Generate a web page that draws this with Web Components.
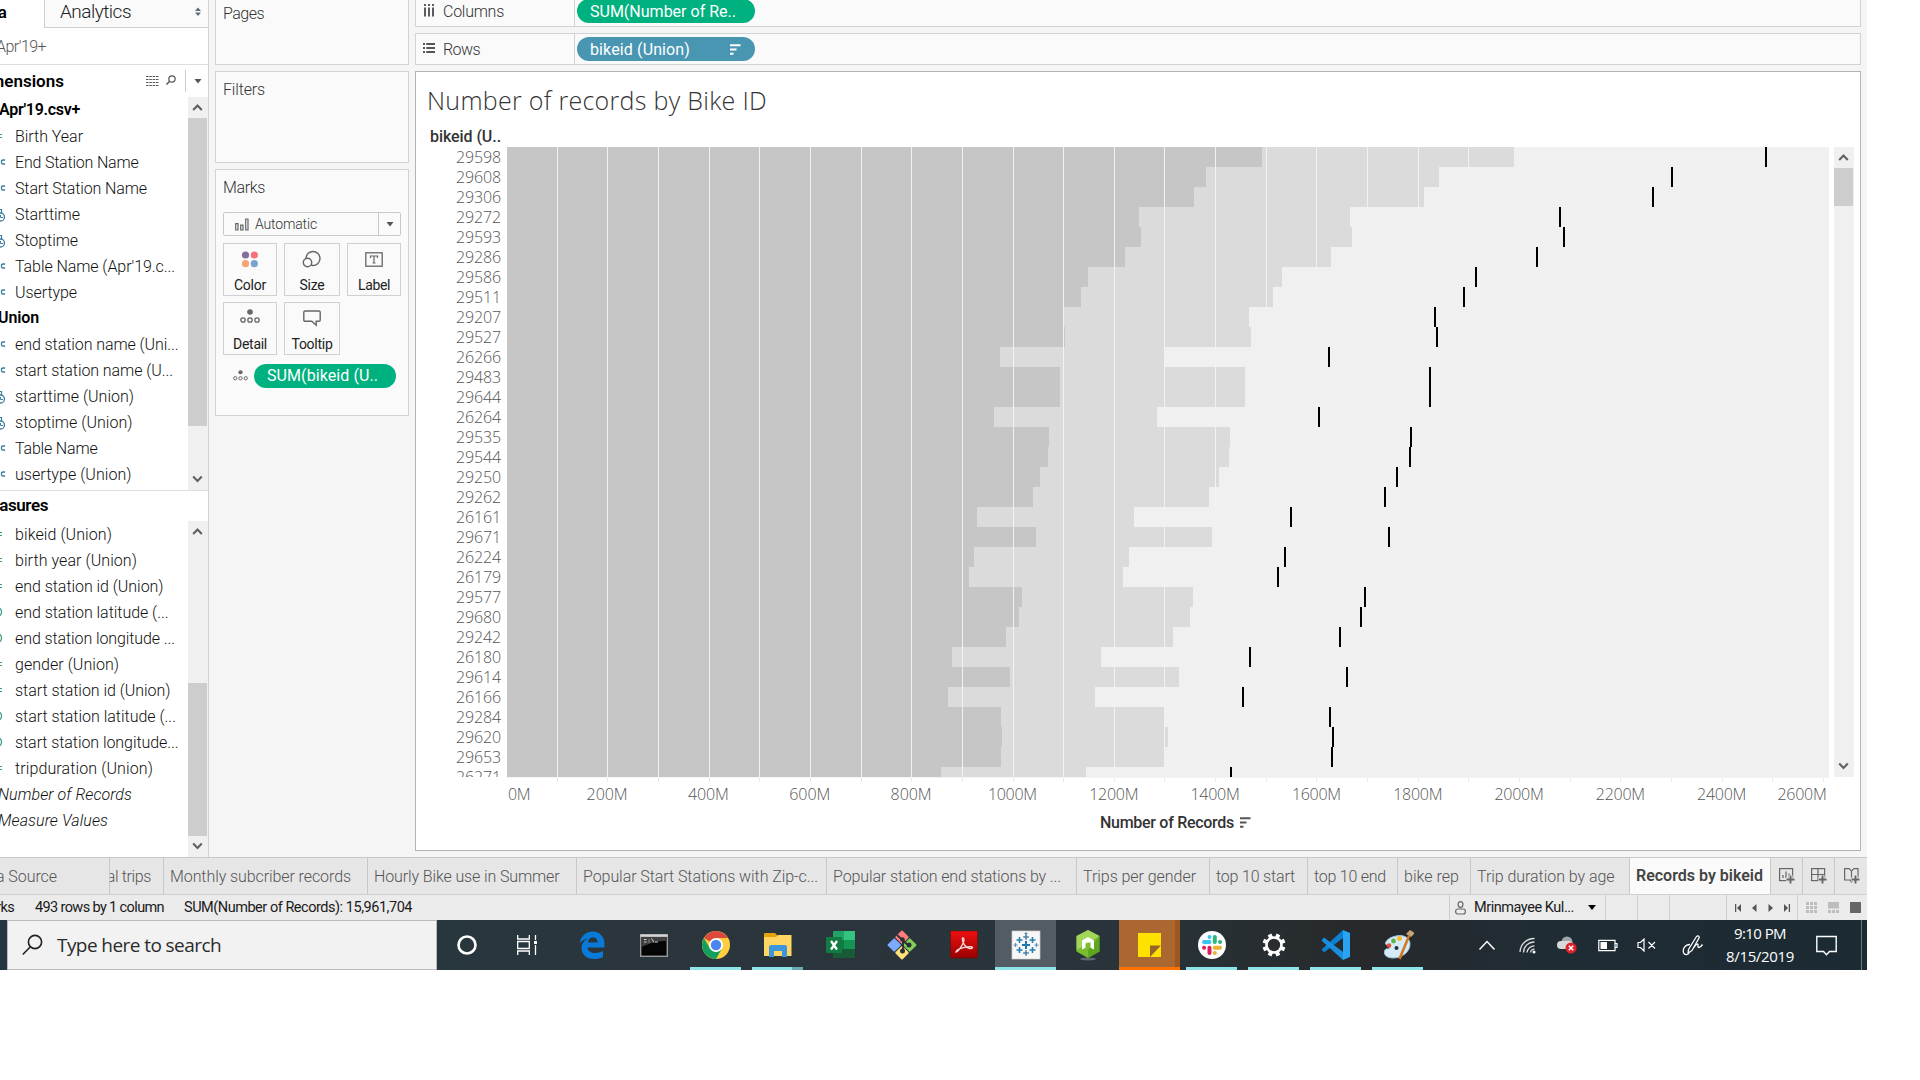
<!DOCTYPE html>
<html lang="en">
<head>
<meta charset="utf-8">
<title>Records by bikeid</title>
<style>
html,body{margin:0;background:#fff;width:1920px;height:1080px;overflow:hidden;font-family:Roboto,"Liberation Sans",sans-serif}
</style>
</head>
<body>
<bike-workbook></bike-workbook>
<script>
const define=(name,render)=>customElements.define(name,class extends HTMLElement{
  connectedCallback(){
    if(this.shadowRoot)return;
    const root=this.attachShadow({mode:'open'});
    root.innerHTML=render(this);
  }
});
const esc=s=>s.replace(/&/g,'&amp;').replace(/</g,'&lt;');

/* One line of text, tracked out or in to the width given by "w". */
customElements.define('fit-text',class extends HTMLElement{
  connectedCallback(){
    if(this.shadowRoot)return;
    const root=this.attachShadow({mode:'open'});
    root.innerHTML='<style>:host{display:block;white-space:pre;flex:none}span{display:inline-block}</style><span><slot></slot></span>';
    const w=+this.getAttribute('w');
    if(w){
      const span=root.querySelector('span'),n=this.textContent.length;
      span.style.letterSpacing=((w-span.getBoundingClientRect().width)/n).toFixed(3)+'px';
    }
  }
});

/* Vertical scrollbar: up/down buttons and a thumb. */
define('scroll-bar',el=>{
  const before=el.getAttribute('before'),size=el.getAttribute('size');
  return `<style>:host{display:flex;flex-direction:column;width:20px;background:#f0f0f0;flex:none}
  svg{display:block;width:19px;height:21px;flex:none}.gap{height:${before}px;flex:none}
  .thumb{height:${size}px;width:19px;background:#cdcdcd;flex:none}.rest{flex:1}</style>
  <svg viewBox="0 0 19 21"><path d="M5.2 13 9.5 8.6 13.8 13" fill="none" stroke="#606060" stroke-width="2.1"/></svg>
  <div class="gap"></div><div class="thumb"></div><div class="rest"></div>
  <svg viewBox="0 0 19 21"><path d="M5.2 7.500 9.5 11.900 13.800 7.500" fill="none" stroke="#606060" stroke-width="2.1"/></svg>`;
});

const fieldIcons={
  abc:'<path d="M5.100 11H2.900Q1.500 11 1.500 12.300V13.700Q1.500 15 2.900 15H5.100" fill="none" stroke="#3f7f9f" stroke-width="1.300"/>',
  num:'<path d="M0 11.500H2M0 14.500H2" stroke="#3a9c80" stroke-width="1.200"/>',
  time:'<path d="M-2 8.500H1.500V12" fill="none" stroke="#3f7f9f" stroke-width="1.200"/><circle cx="0.500" cy="16" r="4" fill="#fff" stroke="#3f7f9f" stroke-width="1.300"/><path d="M.5 14V16.500H3" fill="none" stroke="#3f7f9f" stroke-width="1"/>',
  geo:'<ellipse cx="-1.500" cy="13" rx="3" ry="4" fill="none" stroke="#3a9c80" stroke-width="1.300"/>'
};
define('field-row',el=>`<style>:host{display:flex;align-items:center;height:26px;font-size:16px;color:#111;flex:none;font-weight:350}
  svg{width:15px;height:26px;flex:none}</style>
  <svg viewBox="0 0 15 26">${fieldIcons[el.getAttribute('icon')]||''}</svg><slot></slot>`);

const field=(icon,w,t)=>`<field-row icon="${icon}"><fit-text w="${w}">${esc(t)}</fit-text></field-row>`;

define('data-pane',()=>`<style>
  :host{display:flex;flex-direction:column;width:208px;border-right:1px solid #d2d2d2;background:#fff;overflow:hidden;flex:none}
  .tabs{display:flex;height:28px;flex:none}
  .data{width:44px;box-sizing:border-box;display:flex;justify-content:flex-end;padding:0 37px 4px 0;align-items:center;font-size:17px;font-weight:600}
  .analytics{flex:1;display:flex;align-items:center;justify-content:space-between;padding:0 7px 4px 15px;border:solid #cfcfcf;border-width:0 0 1px 1px;background:#fafafa;font-size:19px;color:#222;font-weight:350}
  .source{height:36px;display:flex;align-items:center;font-size:16px;color:#555;border-bottom:1px solid #dedede;flex:none;font-weight:350}
  .source fit-text{margin-left:-4px}
  .head{display:flex;align-items:center;flex:none;font-size:17px;font-weight:600;color:#000}
  .right{margin-left:auto;display:flex;align-items:center}
  .split{width:1px;height:22px;background:#ccc;margin:0 8px 0 7px}
  .body{display:flex;flex:none}
  .list{width:188px;overflow:hidden}
  .group{height:25px;padding-bottom:1px;display:flex;align-items:center;font-size:16px;font-weight:600;color:#000}
  .it{height:26px;display:flex;align-items:center;font-size:16px;font-style:italic;color:#111;font-weight:350}
  .d{height:32px;padding-right:6px}.m{height:28px;padding-bottom:2px;border-top:1px solid #dedede}
  </style>
  <div class="tabs"><div class="data"><fit-text w="36">Data</fit-text></div>
    <div class="analytics"><fit-text w="71">Analytics</fit-text>
    <svg width="6" height="10" viewBox="0 0 6 10"><path d="M0 4 3 .5 6 4ZM0 5.500H6L3 9Z" fill="#5d6d7a"/></svg></div></div>
  <div class="source"><fit-text w="50">Apr'19+</fit-text></div>
  <div class="head d"><fit-text w="90" style="margin-left:-26px">Dimensions</fit-text>
    <div class="right">
      <svg width="32" height="12" viewBox="0 0 32 12"><path d="M0 1.500H12.500M0 4.500H12.500M0 7.500H12.500M0 10.500H12.500" stroke="#555" stroke-width="1.200" stroke-dasharray="2.500 .8"/><circle cx="26" cy="4" r="3.200" fill="none" stroke="#555" stroke-width="1.200"/><path d="M23.700 6.300 20.500 9.500" stroke="#555" stroke-width="1.500"/></svg>
      <div class="split"></div><svg width="8" height="5"><path d="M.5 0H7.500L4 4.500Z" fill="#555"/></svg>
    </div></div>
  <div class="body" style="height:393px">
    <div class="list"><div class="group"><fit-text w="81" style="margin-left:-1px">Apr'19.csv+</fit-text></div>
    ${field('num',68,'Birth Year')}${field('abc',123.500,'End Station Name')}${field('abc',132,'Start Station Name')}${field('time',65,'Starttime')}${field('time',63,'Stoptime')}${field('abc',160,"Table Name (Apr'19.c...")}${field('abc',62,'Usertype')}
    <div class="group"><fit-text w="41" style="margin-left:-2px">Union</fit-text></div>
    ${field('abc',163.500,'end station name (Uni...')}${field('abc',158,'start station name (U...')}${field('time',119,'starttime (Union)')}${field('time',117.500,'stoptime (Union)')}${field('abc',82.500,'Table Name')}${field('abc',116.500,'usertype (Union)')}</div>
    <scroll-bar before="0" size="308"></scroll-bar></div>
  <div class="head m"><fit-text w="72" style="margin-left:-24px">Measures</fit-text></div>
  <div class="body" style="height:336px">
    <div class="list">
    ${field('num',97,'bikeid (Union)')}${field('num',122,'birth year (Union)')}${field('num',148.500,'end station id (Union)')}${field('geo',153.500,'end station latitude (...')}${field('geo',160,'end station longitude ...')}${field('num',104,'gender (Union)')}${field('num',155.500,'start station id (Union)')}${field('geo',161,'start station latitude (...')}${field('geo',163.500,'start station longitude...')}${field('num',138,'tripduration (Union)')}
    <div class="it"><fit-text w="134" style="margin-left:-2px">Number of Records</fit-text></div>
    <div class="it"><fit-text w="110" style="margin-left:-2px">Measure Values</fit-text></div></div>
    <scroll-bar before="141" size="153"></scroll-bar></div>`);

define('field-pill',el=>`<style>:host{display:flex;align-items:center;height:24px;border-radius:12px;box-sizing:border-box;padding:0 14px 0 13px;font-size:16px;font-weight:450;color:#fff;background:${el.getAttribute('tone')==='blue'?'#4996b2':'#00b180'};flex:none}</style><slot></slot>`);

define('mark-button',()=>`<style>:host{display:flex;flex-direction:column;align-items:center;justify-content:space-between;box-sizing:border-box;height:53px;border:1px solid #d0d0d0;padding:6px 0 1px;font-size:14px;font-weight:400;color:#222;background:#fafafa;line-height:18px}</style><slot name="icon"></slot><slot></slot>`);

const detail=s=>`<svg slot="icon" width="${s}" height="${s*.75}" viewBox="0 0 20 15"><circle cx="10" cy="3" r="2.800" fill="#666"/><g fill="none" stroke="#666" stroke-width="1.300"><circle cx="3" cy="11" r="2.200"/><circle cx="10" cy="11" r="2.200"/><circle cx="17" cy="11" r="2.200"/></g></svg>`;

define('shelf-cards',()=>`<style>
  :host{display:flex;flex-direction:column;width:194px;margin-left:6px;flex:none}
  .card{box-sizing:border-box;border:1px solid #d2d2d2;background:#fafafa;padding-left:7px;font-size:16px;color:#333;display:flex;flex-direction:column;flex:none;line-height:20px;font-weight:350}
  .pages{height:65px;border-top:0;padding-top:4px}.filters{height:92px;margin-top:6px;padding-top:8px}.marks{height:247px;margin-top:6px;padding-top:8px}
  .select{width:178px;height:24px;margin-top:14px;box-sizing:border-box;border:1px solid #c9c9c9;border-radius:2px;display:flex;align-items:center;font-size:14px;padding-left:11px;gap:6px}
  .drop{margin-left:auto;width:21px;height:22px;border-left:1px solid #c9c9c9;display:flex;align-items:center;justify-content:center}
  .grid{display:grid;grid-template-columns:54px 56px 54px;column-gap:7px;row-gap:6px;margin-top:7px}
  .row{display:flex;align-items:center;margin-top:9px;padding-left:10px;gap:6px}
  </style>
  <div class="card pages"><fit-text w="41">Pages</fit-text></div>
  <div class="card filters"><fit-text w="42">Filters</fit-text></div>
  <div class="card marks"><fit-text w="42">Marks</fit-text>
    <div class="select"><svg width="14" height="13" viewBox="0 0 14 13"><path d="M.7 5.700H3V12H.7ZM5.700 7.200H8V12H5.700ZM10.700 1H13V12H10.700Z" fill="none" stroke="#666" stroke-width="1.200"/></svg><fit-text w="62">Automatic</fit-text><span class="drop"><svg width="8" height="5"><path d="M.5 0H7.500L4 4.500Z" fill="#555"/></svg></span></div>
    <div class="grid">
      <mark-button><svg slot="icon" width="18" height="18"><circle cx="4.500" cy="5" r="3.600" fill="#85709c"/><circle cx="13.300" cy="5" r="3.600" fill="#fa6f7c"/><circle cx="4.500" cy="13.700" r="3.600" fill="#f2a475"/><circle cx="13.300" cy="13.700" r="3.600" fill="#7ba3cf"/></svg><fit-text w="32">Color</fit-text></mark-button>
      <mark-button><svg slot="icon" width="20" height="18"><circle cx="11" cy="8.500" r="7" fill="none" stroke="#666" stroke-width="1.400"/><circle cx="5.500" cy="12.500" r="4.200" fill="#fafafa" stroke="#666" stroke-width="1.400"/></svg><fit-text w="25">Size</fit-text></mark-button>
      <mark-button><svg slot="icon" width="18" height="18"><rect x=".8" y="2.800" width="16.400" height="13.400" fill="none" stroke="#666" stroke-width="1.300"/><path d="M5.500 8V6H12.500V8M9 6V13M7.500 13H10.500" fill="none" stroke="#666" stroke-width="1.200"/></svg><fit-text w="32">Label</fit-text></mark-button>
      <mark-button>${detail(20)}<fit-text w="34">Detail</fit-text></mark-button>
      <mark-button><svg slot="icon" width="18" height="18"><path d="M2 2H16Q17.200 2 17.200 3.200V11Q17.200 12.200 16 12.200H13.200V16.200L8.800 12.200H2Q.8 12.200 .8 11V3.200Q.8 2 2 2Z" fill="none" stroke="#666" stroke-width="1.400"/></svg><fit-text w="41">Tooltip</fit-text></mark-button>
    </div>
    <div class="row">${detail(15)}<field-pill style="width:142px"><fit-text w="111">SUM(bikeid (U..</fit-text></field-pill></div>
  </div>`);

const sortIcon=c=>`<svg width="11" height="11" viewBox="0 0 11 11"><path d="M0 1.200H10.500M0 5.500H6.500M0 9.700H3.500" stroke="${c}" stroke-width="1.900"/></svg>`;

/* id, end of the 60% band, end of the 80% band, reference mark: all in page pixels */
const records=[
[29598,1262,1514,1765],[29608,1206,1439,1671],[29306,1194,1424,1652],[29272,1139,1350,1559],[29593,1141,1352,1563],[29286,1125,1331,1536],[29586,1088,1282,1475],[29511,1081,1273,1463],[29207,1064,1249,1434],[29527,1065,1251,1436],[26266,1000,1164,1328],[29483,1060,1245,1429],[29644,1060,1245,1429],[26264,994,1157,1318],[29535,1049,1230,1410],[29544,1048,1229,1409],[29250,1040,1219,1396],[29262,1033,1209,1384],[26161,977,1134,1290],[29671,1036,1212,1388],[26224,974,1129,1284],[26179,969,1123,1277],[29577,1022,1193,1364],[29680,1019,1190,1360],[29242,1006,1173,1339],[26180,952,1101,1249],[29614,1010,1179,1346],[26166,948,1095,1242],[29284,1001,1165,1329],[29620,1002,1168,1332],[29653,1001,1165,1331],[26271,941,1086,1230]];

define('bar-chart',()=>{
  const x0=507;
  const at=k=>Math.floor(506.4+50.66*k)-x0;
  const rect=(x,y,w,h,f)=>`<rect x="${x}" y="${y}" width="${w}" height="${h}" fill="${f}"/>`;
  let s='';
  records.forEach(([,d,m],i)=>{s+=rect(0,i*20,m-x0,20,'#dbdbdb')+rect(0,i*20,d-x0,20,'#c6c6c6');});
  let ticks='';
  for(let k=1;k<27;k++){if(at(k)<1322){s+=rect(at(k),0,1,630,'#f2f2f2');ticks+=rect(at(k),1,1,4,'#e9e9e9');}}
  records.forEach(([,,,t],i)=>{s+=rect(t-x0,i*20,2,20,'#000');});
  let axis='';
  for(let k=0;k<=13;k++){
    const w=k===0?22:k<5?41:49;
    const c=k===0?519:k===13?1802:505.8+101.32*k;
    axis+=`<fit-text w="${w}" style="left:${(c-x0-w/2).toFixed(1)}px">${k*200}M</fit-text>`;
  }
  return `<style>:host{display:flex;flex-direction:column;flex:none}
  .plot{display:flex;height:630px}
  .ids{width:91px;overflow:hidden;flex:none;font:300 16px/20px "Open Sans",sans-serif;color:#555}
  .ids fit-text{margin-left:40px;height:20px}
  svg{display:block}.plot scroll-bar{margin-left:5px}
  .ticks{margin-left:91px;height:5px}
  .axis{position:relative;margin-left:91px;height:24px;font:300 16px/24px "Open Sans",sans-serif;color:#555}
  .axis fit-text{position:absolute;top:0}
  .name{display:flex;align-items:center;gap:6px;margin:4px 0 0 684px;font-size:16px;font-weight:500;color:#333;height:24px}
  </style>
  <div class="plot"><div class="ids">${records.map(r=>`<fit-text w="45">${r[0]}</fit-text>`).join('')}</div>
  <svg width="1322" height="630" style="background:#f0f0f0" shape-rendering="crispEdges">${s}</svg>
  <scroll-bar before="0" size="38"></scroll-bar></div>
  <div class="ticks"><svg width="1322" height="5" shape-rendering="crispEdges">${rect(0,0,1322,1,'#f3f3f3')}${ticks}</svg></div>
  <div class="axis">${axis}</div>
  <div class="name"><fit-text w="134">Number of Records</fit-text>${sortIcon('#555')}</div>`;
});

define('work-view',()=>`<style>
  :host{display:flex;flex-direction:column;width:1446px;margin-left:6px;flex:none}
  .shelf{display:flex;align-items:center;box-sizing:border-box;border:1px solid #d2d2d2;background:#fafafa;flex:none;font-size:16px;color:#333;font-weight:350}
  .label{width:159px;box-sizing:border-box;padding-left:7px;align-self:stretch;border-right:1px solid #d2d2d2;display:flex;align-items:center;gap:8px;flex:none}
  .label svg{margin-top:-3px;width:12px}
  .c{height:27px;border-top:0}.c .label{padding-bottom:3px}
  .c field-pill{margin-top:-4px}
  .r{height:32px;margin-top:6px}.shelf field-pill{width:178px;margin-left:2px;justify-content:space-between}
  .sheet{box-sizing:border-box;height:780px;margin-top:6px;border:1px solid #b3b3b3;background:#fff;display:flex;flex-direction:column}
  h1{margin:11px 0 0 11px;font:300 25px/34px "Open Sans",sans-serif;color:#333;flex:none}
  .hdr{margin:10px 0 0 14px;font-size:16px;line-height:20px;font-weight:500;color:#333;height:20px;flex:none}
  </style>
  <div class="shelf c"><div class="label"><svg height="13" viewBox="0 0 12 13"><path d="M2 0V2M6 0V2M10 0V2M2 3.500V12.500M6 3.500V12.500M10 3.500V12.500" stroke="#555" stroke-width="1.900"/></svg><fit-text w="61">Columns</fit-text></div><field-pill><fit-text w="146">SUM(Number of Re..</fit-text></field-pill></div>
  <div class="shelf r"><div class="label"><svg height="12" viewBox="0 0 12 12"><path d="M0 2H2M3.300 2H12M0 6H2M3.300 6H12M0 10H2M3.300 10H12" stroke="#555" stroke-width="1.900"/></svg><fit-text w="37">Rows</fit-text></div><field-pill tone="blue"><fit-text w="100">bikeid (Union)</fit-text>${sortIcon('#fff')}</field-pill></div>
  <div class="sheet"><h1><fit-text w="340">Number of records by Bike ID</fit-text></h1><div class="hdr"><fit-text w="71">bikeid (U..</fit-text></div><bar-chart></bar-chart></div>`);

const newIcon=p=>`<svg width="18" height="18" viewBox="0 0 18 18"><g fill="none" stroke="#666" stroke-width="1.200">${p}</g><path d="M12.500 8V17M8 12.500H17" stroke="#e6e6e6" stroke-width="4"/><path d="M12.500 8.500V16.500M8.500 12.500H16.500" stroke="#666" stroke-width="1.900"/></svg>`;
define('sheet-tabs',()=>{
  const tabs=[[181,'Monthly subcriber records',204],[185.5,'Hourly Bike use in Summer',209],[235,'Popular Start Stations with Zip-c...',250],[228,'Popular station end stations by ...',250],[113,'Trips per gender',133],[79,'top 10 start',98],[72,'top 10 end',90],[55,'bike rep',73],[137.5,'Trip duration by age',159]];
  return `<style>:host{display:flex;height:36px;border-top:1px solid #c8c8c8;background:#e6e6e6;font-size:16px;color:#555;flex:none;font-weight:350}
  div{box-sizing:border-box;border-right:1px solid #c8c8c8;display:flex;align-items:center;overflow:hidden;flex:none;padding-left:6px}
  .end{justify-content:flex-end;padding:0}.on{background:#fafafa;color:#444;font-weight:600;padding-bottom:1px}
  .add{width:32px;padding:0 0 0 1px;justify-content:center}</style>
  <div style="width:110px;padding:0"><fit-text w="85" style="margin-left:-28px">Data Source</fit-text></div>
  <div class="end" style="width:54px;padding-right:12px"><fit-text w="66">Total trips</fit-text></div>
  ${tabs.map(t=>`<div style="width:${t[2]}px"><fit-text w="${t[0]}">${t[1]}</fit-text></div>`).join('')}
  <div class="on" style="width:141px"><fit-text w="127">Records by bikeid</fit-text></div>
  <div class="add">${newIcon('<rect x="1.600" y="1.600" width="13" height="12"/><path d="M5 11V8M8 11V4.500M11 11V6.500"/>')}</div>
  <div class="add">${newIcon('<rect x="1.600" y="1.600" width="13" height="12"/><path d="M8 2V13M2 7.500H15"/>')}</div>
  <div class="add" style="width:33px">${newIcon('<path d="M1.600 1.600H6L8.500 4 11 1.600H15V13H10L8.500 15 7 13H1.600ZM8.500 4V15"/>')}</div>`;
});

define('status-bar',()=>`<style>:host{display:flex;align-items:center;height:25px;border-top:1px solid #cfcfcf;background:#ebebeb;font-size:14.500px;color:#1a1a1a;flex:none;font-weight:400}
  .cell{height:25px;border-left:1px solid #cfcfcf;box-sizing:border-box;display:flex;align-items:center;flex:none}
  .user{margin-left:auto;width:156px;gap:8px;padding-left:5px}</style>
  <fit-text w="37" style="margin-left:-23px">Marks</fit-text><fit-text w="129" style="margin-left:21px">493 rows by 1 column</fit-text><fit-text w="228" style="margin-left:20px">SUM(Number of Records): 15,961,704</fit-text>
  <div class="cell user"><svg width="11" height="14" viewBox="0 0 11 14"><ellipse cx="5.500" cy="3.500" rx="2.400" ry="2.900" fill="none" stroke="#666" stroke-width="1.200"/><rect x=".7" y="8" width="9.600" height="5" rx="2" fill="none" stroke="#666" stroke-width="1.200"/></svg><fit-text w="100">Mrinmayee Kul...</fit-text><svg width="8" height="5" style="margin-left:6px"><path d="M0 0H8L4 5Z"/></svg></div>
  <div class="cell" style="width:32px"></div><div class="cell" style="width:32px"></div><div class="cell" style="width:57px"></div>
  <div class="cell" style="width:71px;padding-left:7.500px"><svg width="56" height="8" viewBox="0 0 56 8"><path d="M.6 0V8M54.400 0V8" stroke="#555" stroke-width="1.300"/><path d="M6 0V8L2 4ZM21.500 0V8L17 4ZM33.500 0V8L38 4ZM49 0V8L53 4Z" fill="#555"/></svg></div>
  <div class="cell" style="width:70px;padding-left:8px;gap:11px"><svg width="11" height="11"><path d="M0 1.500H11M0 5.500H11M0 9.500H11" stroke="#bdbdbd" stroke-width="3" stroke-dasharray="3 1"/></svg><svg width="11" height="11"><rect width="11" height="6.500" fill="#bdbdbd"/><path d="M0 9.500H11" stroke="#bdbdbd" stroke-width="3" stroke-dasharray="3 1"/></svg><svg width="11" height="11"><rect width="11" height="11" fill="#666"/></svg></div>`);

/* Taskbar button; state is "open", "active" or "alert". */
define('task-button',el=>{
  const st=el.getAttribute('state');
  const c={open:'#8de5ea',active:'#8de5ea',alert:'#ff7200'}[st]||'transparent';
  return `<style>:host{display:flex;flex-direction:column;width:62px;height:50px;flex:none}
  .b{width:61px;height:50px;display:flex;flex-direction:column;align-items:center;background:${st==='active'?'#535c62':st==='alert'?'linear-gradient(90deg,#aa672f 0 56px,#9c5820 56px)':'none'}}
  .i{height:47px;display:flex;align-items:center;padding-top:3px;box-sizing:border-box}
  .u{height:3px;width:${st==='open'?51:61}px;background:${el.hasAttribute('stacked')?'linear-gradient(90deg,#8de5ea 0 40px,#6aaab2 40px)':c};flex:none}</style><div class="b"><div class="i"><slot></slot></div><div class="u"></div></div>`;
});
const I=(p,s=32,st='')=>`<svg width="${s}" height="${s}" viewBox="0 0 32 32" style="${st}">${p}</svg>`;
const plus=(x,y,r,c,w=1.6)=>`<path d="M${x-r} ${y}H${x+r}M${x} ${y-r}V${y+r}" stroke="${c}" stroke-width="${w}"/>`;
const gear=(()=>{let s='';for(let a=0;a<8;a++)s+=`<rect x="14" y="4.500" width="4" height="5" fill="#fff" transform="rotate(${a*45+22.5} 16 16)"/>`;return s+'<circle cx="16" cy="16" r="7.500" fill="none" stroke="#fff" stroke-width="2.600"/>';})();

define('task-bar',()=>`<style>
  :host{display:flex;height:50px;background:linear-gradient(90deg,#22363f,#2a363c 33%,#28343a 60%,#27292b 73%,#202c34 82%,#1c2a33);flex:none;font-family:"Open Sans",sans-serif;color:#fff}
  .search{width:430px;margin-left:7px;box-sizing:border-box;background:#f2f2f2;border:1px solid #bbb;display:flex;align-items:center;color:#2b2b2b;font-size:19px;padding-left:14px;gap:14px;flex:none}
  .sys{width:60px;display:flex;align-items:center;justify-content:center;flex:none}
  .tray{display:flex;align-items:center;margin-left:49px}
  .tray svg{flex:none}
  .clock{width:80px;display:flex;flex-direction:column;align-items:center;font-size:15px;line-height:23px;margin-left:16px}
  .show{margin-left:auto;width:5px;border-left:1px solid #6f7a80}
  svg{display:block}</style>
  <div class="search"><svg width="21" height="22" viewBox="0 0 21 22"><circle cx="13" cy="8" r="6.600" fill="none" stroke="#222" stroke-width="1.600"/><path d="M8.400 12.700.8 20.500" stroke="#222" stroke-width="1.600"/></svg><fit-text w="164">Type here to search</fit-text></div>
  <div class="sys"><svg width="20" height="20"><circle cx="10" cy="10" r="8.500" fill="none" stroke="#fff" stroke-width="2.600"/></svg></div>
  <div class="sys" style="width:64px"><svg width="20" height="20" viewBox="0 0 20 20" style="margin-left:-4px"><path d="M.7 0V4H12.300V0M.7 20V16H12.300V20M.7 6.500H12.300V13.500H.7ZM18.500 0V5M18.500 10V20" fill="none" stroke="#fff" stroke-width="1.300"/><rect x="17" y="6" width="3" height="3" fill="#fff"/></svg></div>
  <task-button>${I('<path d="M3.500 14.500C5 6.500 10.500 2.500 16.500 2.500 24 2.500 28.500 8 28.500 15V18.500H11.500C12 22.500 15.500 24 19 24 22 24 25 23 27 22V28C24.500 29.400 21.500 30 18 30 10.500 30 5.500 25.500 5.500 19 5.500 14.500 8.500 11 12.200 9.500 8.500 9.800 5.500 12 3.500 14.500ZM12 13.500H21.500C21.500 10.500 20 8.300 17 8.300 14 8.300 12.500 10.500 12 13.500Z" fill="#0a7ad8" fill-rule="evenodd"/>')}</task-button>
  <task-button><svg width="28" height="23" viewBox="0 0 28 23"><rect x=".7" y=".7" width="26.600" height="21.600" fill="#050505" stroke="#9a9a9a" stroke-width="1.400"/><path d="M1.400 3H26.600V7C16 6.500 8 10 1.400 13Z" fill="#404040"/><path d="M.5 1.700H27.500" stroke="#d5d5d5" stroke-width="2.400"/><path d="M4 5.500H6.500M4 8H6.500M9 5.500V6.500M9 7.500V8.500M11.500 4.500 14 8.500M15 8H18" stroke="#ddd" stroke-width=".9"/></svg></task-button>
  <task-button state="open">${I('<circle cx="16" cy="16" r="14" fill="#ffcd40"/><path d="M16 16 3.900 9A14 14 0 0 1 28.100 9H16Z" fill="#db4a3d"/><path d="M3.900 9A14 14 0 0 0 16 30L22 19.500 16 16 10 19.500Z" fill="#12a05c"/><circle cx="16" cy="16" r="7" fill="#fff"/><circle cx="16" cy="16" r="5.200" fill="#4a86ee"/>')}</task-button>
  <task-button state="open" stacked>${I('<path d="M2 5Q2 4 3 4H13L16 7H29V26H2Z" fill="#e6a209"/><path d="M2 8H14L16 6H29.500V27H2Z" fill="#ffd661"/><path d="M7 28V18Q7 16 9 16H23Q25 16 25 18V28H20V22H12V28Z" fill="#3d95dc"/>')}</task-button>
  <task-button>${I('<rect x="9" y="2" width="22" height="27" rx="1" fill="#21a366"/><rect x="20" y="2" width="11" height="9" fill="#33c481"/><rect x="9" y="11" width="11" height="9" fill="#107c41"/><rect x="20" y="11" width="11" height="9" fill="#159553"/><rect x="9" y="20" width="22" height="9" fill="#185c37"/><rect x="2" y="8" width="16" height="16" rx="1" fill="#107c41"/><path d="M7 12 13 20.500M13 12 7 20.500" stroke="#fff" stroke-width="2.300"/>')}</task-button>
  <task-button>${I('<g transform="rotate(45 16 16)"><rect x="5.500" y="5.500" width="10" height="10" rx="1" fill="#ff7d7d"/><rect x="16.500" y="5.500" width="10" height="10" rx="1" fill="#83cf58"/><rect x="5.500" y="16.500" width="10" height="10" rx="1" fill="#7da9ff"/><rect x="16.500" y="16.500" width="10" height="10" rx="1" fill="#ffe27a"/></g><path d="M11 6 17 11.500V23M17 11.500 23 17" stroke="#283034" stroke-width="1.800" fill="none"/><circle cx="16.500" cy="10.500" r="2.300" fill="#283034"/><circle cx="16.500" cy="22" r="2.500" fill="#283034"/><circle cx="23" cy="16" r="2.500" fill="#283034"/>')}</task-button>
  <task-button>${I('<defs><linearGradient id="r" x1="0" y1="0" x2="0" y2="1"><stop stop-color="#f01010"/><stop offset="1" stop-color="#980000"/></linearGradient></defs><rect x="2.500" y="2" width="27" height="27" fill="url(#r)" stroke="#6d0c0c" stroke-width=".6"/><path d="M8 23C11 22 17 13 15.800 9.500 14 7 13.500 12 16.500 16 19 19.500 24 20.500 24.500 18.500 24 16.500 12 18.500 8.500 21.800Z" fill="none" stroke="#f4dada" stroke-width="1.300"/>')}</task-button>
  <task-button state="active">${I('<rect x="2" y="2" width="28" height="28" fill="#f7f7f7" stroke="#cfcfcf" stroke-width=".7"/>'+plus(16,16,4,'#2079ae',2)+plus(16,8,2.8,'#4a7fa5')+plus(16,24,2.8,'#4a7fa5')+plus(9.500,11,3,'#2380b5')+plus(22.500,11,3,'#2380b5')+plus(9.500,21,3,'#2380b5')+plus(22.500,21,3,'#2380b5')+plus(5.500,16,2,'#5b8fb5',1.2)+plus(26.500,16,2,'#5b8fb5',1.2)+plus(16,4.500,1.500,'#5b8fb5',1))}</task-button>
  <task-button>${I('<ellipse cx="16" cy="30" rx="8" ry="1.500" fill="#5d696d"/><path d="M16 1 27.500 7V22.500L16 29 4.500 22.500V7Z" fill="#7abd2e"/><path d="M16 1 27.500 7 4.500 21V7Z" fill="#b2dd69" opacity=".75"/><path d="M27.500 7V22.500L16 29V21Z" fill="#4b9a18" opacity=".6"/><path d="M10 20.500V11.500L16 8 22 11.500V20.500L18.500 18.800V13.500H13.500V18.800Z" fill="#fff"/>')}</task-button>
  <task-button state="alert"><svg width="23" height="24" style="margin-left:-1px"><path d="M0 0H23V24H0Z" fill="#ffe100"/><path d="M12 12.500H23L12 24Z" fill="#99622b"/></svg></task-button>
  <task-button state="open">${I('<circle cx="16" cy="16" r="14" fill="#fff"/><g stroke-width="4" stroke-linecap="round"><path d="M8 13H13.500" stroke="#36c5f0"/><path d="M13.500 8V8.100" stroke="#36c5f0"/><path d="M18.800 8V13" stroke="#2eb67d"/><path d="M24 13H24.100" stroke="#2eb67d"/><path d="M18.800 18.800H24" stroke="#ecb22e"/><path d="M18.800 24V24.100" stroke="#ecb22e"/><path d="M13.500 18.800V24" stroke="#e01e5a"/><path d="M8 18.800H8.100" stroke="#e01e5a"/></g>')}</task-button>
  <task-button state="open">${I(gear)}</task-button>
  <task-button state="open">${I('<path d="M23 1V31L30 28V4Z" fill="#2aa3f2"/><path d="M23 1 1.500 20.500 4 23.500 23 9Z" fill="#0b7fd0"/><path d="M23 31 1.500 11.500 4 8.500 23 23Z" fill="#1a8fe0"/>')}</task-button>
  <task-button state="open">${I('<path d="M14 7C23 5 28 10 28 15 28 23 20 29 11 29 4 29 1 25 3 21 4 19 7 21 8 18 8 15 3 17 3.500 14 5 10 9 8 14 7Z" fill="#d5ebf8" stroke="#9cc7e2"/><circle cx="14.500" cy="19" r="2" fill="#27323b"/><circle cx="7" cy="16.500" r="2.300" fill="#e44d36"/><circle cx="11.500" cy="12" r="2.400" fill="#5cb646"/><circle cx="17.500" cy="9.500" r="2.500" fill="#f8b72c"/><path d="M27 7 17.500 30" stroke="#d17820" stroke-width="2.600"/><path d="M24 5 28 1 33 4 29 8Z" fill="#c8a474"/>')}</task-button>
  <div class="tray">
    <svg width="18" height="12" viewBox="0 0 18 12"><path d="M1.500 10.500 9 2.500 16.500 10.500" fill="none" stroke="#fff" stroke-width="1.500"/></svg>
    <svg width="17" height="17" viewBox="0 0 17 17" style="margin-left:23px"><g fill="none" stroke="#ddd" stroke-width="1.300"><path d="M1 15A14 14 0 0 1 15.500 1.500M4.500 15.500A10.500 10.500 0 0 1 15.500 5M8 15.500A7.500 7.500 0 0 1 15.500 8.800M11.500 15.500A4 4 0 0 1 15.500 12.200"/></g><circle cx="15" cy="15" r="1.500" fill="#fff"/></svg>
    <svg width="22" height="18" viewBox="0 0 22 18" style="margin-left:20px"><circle cx="11" cy="6" r="5.500" fill="#9fa5a8"/><rect x="1" y="5" width="16" height="8" rx="4" fill="#d6d8da"/><circle cx="15" cy="12" r="5.500" fill="#df2028"/><path d="M12.800 9.800 17.200 14.200M17.200 9.800 12.800 14.200" stroke="#fff" stroke-width="1.500"/></svg>
    <svg width="20" height="13" viewBox="0 0 20 13" style="margin-left:20px"><path d="M.8 1.300H17V11.700H.8ZM17 4.500H19V8.500H17" fill="none" stroke="#fff" stroke-width="1.200"/><rect x="2.500" y="3" width="6.500" height="7" fill="#fff"/></svg>
    <svg width="20" height="14" viewBox="0 0 20 14" style="margin-left:19px"><path d="M1 4.500H3.500L7 1V13L3.500 9.500H1ZM11.500 4 18 10.500M18 4 11.500 10.500" fill="none" stroke="#fff" stroke-width="1.200"/></svg>
    <svg width="22" height="22" viewBox="0 0 22 22" style="margin-left:25px"><g fill="none" stroke="#fff" stroke-width="1.300" stroke-linejoin="round"><path d="M6.500 15.500 14.500 2.500Q16.500 .7 17.300 3.500L10 16.500 6 19Z"/><path d="M8 10.500C3 10.500 .5 15 1.500 18.500 2.500 21.500 6 21 7.500 18.500M12 13.500C14 9.500 16.500 9 16 11.500 15.500 14.500 18 14 20.500 10.500"/></g></svg>
    <div class="clock"><fit-text w="52">9:10 PM</fit-text><fit-text w="68">8/15/2019</fit-text></div>
    <svg width="21" height="21" viewBox="0 0 21 21" style="margin-left:16px"><path d="M.8 1.500H20.200V16.500H13.500L10.500 19.800 7.500 16.500H.8Z" fill="none" stroke="#fff" stroke-width="1.400"/></svg>
  </div>
  <div class="show"></div>`);

define('bike-workbook',()=>`<style>
  :host{display:flex;flex-direction:column;width:1867px;height:970px;overflow:hidden;background:#f5f5f5}
  .main{display:flex;height:857px;flex:none}
  </style>
  <div class="main"><data-pane></data-pane><shelf-cards></shelf-cards><work-view></work-view></div>
  <sheet-tabs></sheet-tabs><status-bar></status-bar><task-bar></task-bar>`);
</script>
</body>
</html>
